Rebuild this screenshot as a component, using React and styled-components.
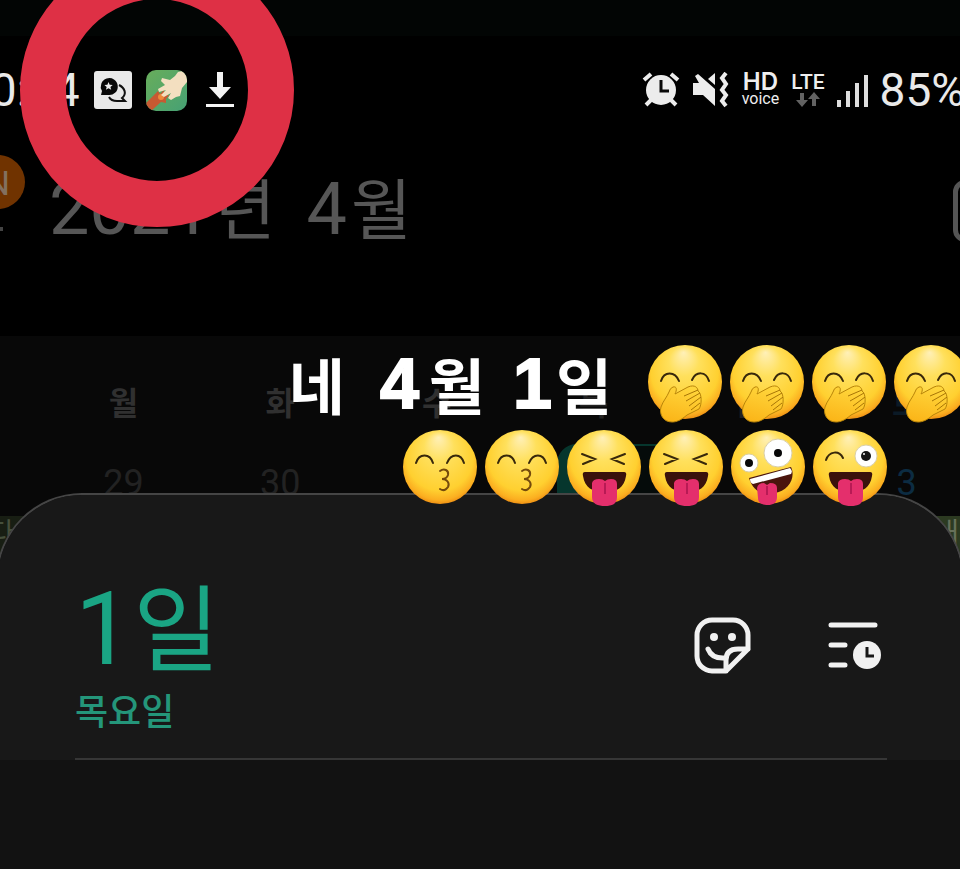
import React from "react";
import styled, { createGlobalStyle } from "styled-components";

const Global = createGlobalStyle`
  * { box-sizing: border-box; }
  html, body { margin: 0; background: #000; }
  body { font-family: Roboto, "Noto Sans CJK KR", sans-serif; color: #eee; overflow: hidden; }
  h1, h2, p { margin: 0; font-weight: 400; }
`;

const Screen = styled.main`
  position: relative;
  min-height: 100vh;
  overflow: hidden;
  display: flex;
  flex-direction: column;
  background: #000;
`;
const TopStrip = styled.div`
  height: 36px;
  background: #020504;
`;
const StatusBar = styled.header`
  display: flex;
  justify-content: space-between;
  align-items: center;
  height: 108px;
  margin: 0 -5px 0 -35px;
`;
const StatusGroup = styled.div`
  display: flex;
  align-items: center;
  gap: ${(p) => p.$gap}px;
`;
const StatusText = styled.span`
  font-size: 46px;
  line-height: 48px;
  color: #e9e9e9;
`;
const Stack = styled.span`
  display: flex;
  flex-direction: column;
  align-items: center;
  height: 36px;
`;
const StackTop = styled.span`
  font-family: ${(p) => p.$family};
  font-size: ${(p) => p.$size}px;
  line-height: 20px;
  font-weight: ${(p) => p.$weight};
`;
const StackBottom = styled.span`
  font-size: 16px;
  line-height: 14px;
`;

const MonthBar = styled.header`
  display: flex;
  align-items: flex-start;
  justify-content: space-between;
  height: 192px;
  padding: 11px 0 0 0;
  margin: 0 -55px 0 -29px;
`;
const MonthLeft = styled.div`
  display: flex;
  gap: 24px;
`;
const MenuButton = styled.button`
  width: 54px;
  height: 78px;
  padding: 0;
  border: 0;
  display: flex;
  flex-direction: column;
  align-items: center;
  background: none;
  color: #555;
  font-family: inherit;
`;
const Badge = styled.span`
  width: 54px;
  height: 54px;
  border-radius: 50%;
  background: #703300;
  color: #83705f;
  font-size: 34px;
  line-height: 56px;
  text-align: center;
`;
const MenuEdge = styled.span`
  width: 4px;
  height: 4px;
  margin: 18px 0 0 6px;
  background: #444;
`;
const MonthTitle = styled.h1`
  display: flex;
  align-items: baseline;
  gap: 31px;
  font-size: 72px;
  line-height: 76px;
  margin-top: 17px;
  color: #565656;
  white-space: nowrap;
`;
const Hangul = styled.span`
  font-size: ${(p) => p.$size}px;
  margin-left: ${(p) => p.$gap}px;
`;
const TodayButton = styled.button`
  width: 62px;
  height: 62px;
  margin-top: 25px;
  border: 5px solid #555;
  border-radius: 12px;
  background: none;
`;

const Calendar = styled.section`
  height: 264px;
  padding-top: 51px;
  background: #080808;
`;
const Week = styled.div`
  display: grid;
  grid-template-columns: repeat(7, 1fr);
  width: 114.2%;
  margin: 0 0 ${(p) => p.$after || 0}px -11.6%;
  text-align: center;
`;
const WeekDay = styled.span`
  font-size: 32px;
  line-height: 34px;
  font-weight: 700;
  color: ${(p) => p.$color || "#303030"};
`;
const DayCell = styled.span`
  position: relative;
  font-size: 36px;
  line-height: 32px;
  color: ${(p) => p.$color || "#222"};
`;
const Selected = styled.span`
  position: absolute;
  left: 27%;
  top: -23px;
  width: 110px;
  height: 80px;
  border: 2px solid #06362d;
  border-radius: 20px 8px 0 0;
  background: linear-gradient(90deg, #06362d 20px, #050b0a 24px);
`;
const Events = styled.div`
  display: flex;
  justify-content: space-between;
  height: 60px;
  overflow: hidden;
`;
const EventBar = styled.span`
  width: 70px;
  padding: 0 1px;
  font-size: 28px;
  line-height: 36px;
  background: ${(p) => p.$bg};
  color: ${(p) => p.$fg};
  text-align: ${(p) => p.$align};
  text-indent: ${(p) => p.$indent || 0}px;
  white-space: nowrap;
  overflow: hidden;
`;

const Sheet = styled.section`
  position: relative;
  flex: 1;
  margin: -107px -4px 0;
  border: 2px solid #454545;
  border-bottom: 0;
  border-radius: 86px 86px 0 0;
  background: #121212;
  overflow: hidden;
`;
const SheetHead = styled.header`
  padding: 82px 75px 0 77px;
  background: #181818;
`;
const SheetRow = styled.div`
  display: flex;
  justify-content: space-between;
  align-items: flex-start;
  min-height: 183px;
  border-bottom: 2px solid #363636;
`;
const DayNumber = styled.h2`
  font-size: 102px;
  line-height: 104px;
  color: #1aa584;
  white-space: nowrap;
`;
const DayName = styled.p`
  font-size: 36px;
  line-height: 58px;
  font-weight: 500;
  color: #24967a;
`;
const Actions = styled.div`
  display: flex;
  align-items: center;
  gap: 77px;
  margin: 40px 6px 0 0;
`;
const IconButton = styled.button`
  display: flex;
  padding: 0;
  border: 0;
  background: none;
`;

const Ring = styled.div`
  position: absolute;
  top: -47px;
  left: 20px;
  width: 274px;
  height: 274px;
  border: 46px solid #de3045;
  border-radius: 50%;
`;
const Caption = styled.div`
  position: absolute;
  top: 340px;
  right: -8px;
  display: flex;
  flex-direction: column;
  align-items: flex-end;
  gap: 2px;
`;
const CaptionLine = styled.div`
  display: flex;
  align-items: center;
  gap: 8px;
  height: 83px;
  padding-right: ${(p) => p.$end || 0}px;
`;
const CaptionText = styled.p`
  display: flex;
  align-items: center;
  align-self: flex-start;
  font-family: "Noto Sans CJK KR", sans-serif;
  font-size: 61px;
  line-height: 78px;
  font-weight: 700;
  color: #fff;
  margin-right: 28px;
`;
const HeavyDigit = styled.span`
  font-family: "Liberation Sans", sans-serif;
  font-size: 70px;
  -webkit-text-stroke: 2px #fff;
  line-height: 88px;
  margin: 0 ${(p) => p.$after}px 0 ${(p) => p.$before}px;
`;

const ChatIcon = () => (
  <svg width="38" height="38" viewBox="0 0 38 38" aria-hidden="true">
    <rect width="38" height="38" rx="3" fill="#e9e9e9" />
    <path d="M25 14C31 17 33 23 28 27L31 30H23C19 30 16 28 15 26" fill="none" stroke="#111" strokeWidth="2" />
    <path d="M7 24L8 20A8.500 8.500 0 1 1 14 24Z" fill="#080808" />
    <path d="M14.500 11l1.200 2.700 3 .2-2.300 2 .8 2.900-2.700-1.600-2.600 1.600.8-2.900-2.300-2 3-.2z" fill="#eee" />
  </svg>
);
const HandAppIcon = () => (
  <svg width="41" height="41" viewBox="0 0 41 41" aria-hidden="true">
    <defs>
      <linearGradient id="app" x2="1" y2="1">
        <stop stopColor="#68ad5b" />
        <stop offset="1" stopColor="#46a174" />
      </linearGradient>
      <clipPath id="appClip"><rect width="41" height="41" rx="10" /></clipPath>
    </defs>
    <g clipPath="url(#appClip)">
      <rect width="41" height="41" fill="url(#app)" />
      <path d="M0 33L9 24L12 21L14 24L18 20L18 25L23 25L20 29L20 33L15 32L5 41H0Z" fill="#c75a32" />
      <circle cx="15" cy="27" r="3" fill="#ed8a3c" />
      <path d="M32 2L41 0V12L36 18L34 26L30 27L25 30L22 28L25 23L18 27L15 25L20 20L13 22L12 19L19 15L15 11L16 8L24 10L29 6Z" fill="#f3dfc0" />
    </g>
  </svg>
);
const DownloadIcon = () => (
  <svg width="38" height="38" viewBox="0 0 38 38" aria-hidden="true">
    <path d="M16 1H22V16H30L19 28L8 16H16Z" fill="#f3f3f3" />
    <path d="M5 33H33V36H5Z" fill="#f3f3f3" />
  </svg>
);
const AlarmIcon = () => (
  <svg width="38" height="36" viewBox="0 0 38 36" aria-hidden="true">
    <g stroke="#ececec" strokeWidth="4" fill="none">
      <path d="M2 8L9 2M29 2L36 8M10 27L4 33M28 27L34 33" />
    </g>
    <circle cx="19" cy="18" r="15" fill="#ececec" />
    <path d="M19 8V19H27" fill="none" stroke="#080808" strokeWidth="3" />
  </svg>
);
const MuteIcon = () => (
  <svg width="38" height="36" viewBox="0 0 38 36" aria-hidden="true">
    <path d="M1 11H7L3 4L6 2L23 17V34L11 23H1Z" fill="#ececec" />
    <path d="M23 1V13L16 7Z" fill="#ececec" />
    <path d="M34 1L30 6L34 12L30 18L34 23L30 29L34 34" fill="none" stroke="#ececec" strokeWidth="4" />
  </svg>
);
const DataArrows = () => (
  <svg width="26" height="16" viewBox="0 0 26 16" aria-hidden="true">
    <path d="M5 1H9V8H13L7 15L1 8H5ZM17 14H21V7H25L19 0L13 7H17Z" fill="#626262" />
  </svg>
);
const SignalIcon = () => (
  <svg width="31" height="33" viewBox="0 0 31 33" aria-hidden="true">
    <path d="M0 26H4V33H0ZM9 17H13V33H9ZM18 9H22V33H18ZM27 1H31V33H27Z" fill="#dedede" />
  </svg>
);
const StickerIcon = () => (
  <svg width="57" height="57" viewBox="0 0 57 57" aria-hidden="true">
    <path
      d="M54 32V18A15 15 0 0 0 39 3H18A15 15 0 0 0 3 18V39A15 15 0 0 0 18 54H32L54 32H44Q32 32 32 43V54M14 32Q18 42 31 41"
      fill="none" stroke="#f1f1f1" strokeWidth="5" strokeLinejoin="round" strokeLinecap="round"
    />
    <circle cx="20" cy="20" r="4" fill="#f1f1f1" />
    <circle cx="38" cy="20" r="4" fill="#f1f1f1" />
  </svg>
);
const AgendaIcon = () => (
  <svg width="53" height="47" viewBox="0 0 53 47" aria-hidden="true">
    <path d="M3 3H47M3 23H17M3 43H17" stroke="#f1f1f1" strokeWidth="5" strokeLinecap="round" />
    <circle cx="39" cy="33" r="14" fill="#f1f1f1" />
    <path d="M39 25V34H46" fill="none" stroke="#181818" strokeWidth="3" />
  </svg>
);

const ink = { fill: "none", stroke: "#38280b", strokeWidth: 2, strokeLinecap: "round" };
const BigTongue = () => (
  <>
    <path d="M18 42H57Q60 42 59 46C57 58 50 62 38 62C25 62 18 58 16 46Q15 42 18 42Z" fill="#3a120c" />
    <path d="M25 53Q26 49 32 49Q36 49 38 51Q40 49 44 49Q50 49 50 54V67C50 74 45 76 38 76C31 76 25 74 25 67Z" fill="#e42f6c" />
    <path d="M38 53V64" stroke="#b81a55" strokeWidth="2" />
  </>
);
const faces = {
  giggle: (
    <>
      <path d="M13 36C16 26 27 26 31 36M44 35C48 26 58 26 61 36" {...ink} />
      <path
        d="M25 42C29 41 29 45 27 49L40 42C47 39 50 43 50 46C54 48 54 60 51 64L39 70C33 75 29 77 24 77C15 77 11 69 13 62C15 56 19 52 21 47Q22 43 25 42Z"
        fill="url(#hand)" stroke="#b88409" strokeWidth="1"
      />
      <path d="M36 51L50 45M38 56L52 48M41 61L53 52M43 65L52 58" fill="none" stroke="#a87506" strokeWidth="1" />
    </>
  ),
  kiss: (
    <>
      <path d="M13 33C16 23 27 23 30 33M44 33C48 23 58 23 61 33" {...ink} />
      <path d="M37 41C41 38 46 40 45 45C44 48 41 49 39 49C44 49 47 53 45 57C43 60 40 61 37 59" {...ink} stroke="#754b0c" />
    </>
  ),
  squint: (
    <>
      <path d="M15 24L28 29L16 34M58 24L45 29L57 34" {...ink} />
      <BigTongue />
    </>
  ),
  zany: (
    <>
      <circle cx="18" cy="33" r="9" fill="#fff" stroke="#d9cfa8" />
      <circle cx="18" cy="33" r="4" fill="#080808" />
      <circle cx="47" cy="23" r="14" fill="#fff" stroke="#d9cfa8" />
      <circle cx="47" cy="23" r="4" fill="#080808" />
      <path d="M18 48L60 37C65 47 58 61 43 63C30 65 22 61 18 48Z" fill="#4a150d" />
      <path d="M19 49L59 38Q62 41 60 44L22 54Q19 53 19 49Z" fill="#fff" />
      <path d="M26 58Q27 53 33 53L36 55L39 53Q46 53 46 58V67C46 73 42 75 37 75C31 75 27 73 27 68Z" fill="#e42f6c" />
      <path d="M36 56V65" stroke="#b81a55" strokeWidth="2" />
    </>
  ),
  wink: (
    <>
      <path d="M13 30C16 21 26 20 30 28" {...ink} />
      <circle cx="53" cy="26" r="11" fill="#fff" stroke="#d9cfa8" />
      <circle cx="53" cy="26" r="5" fill="#151515" />
      <circle cx="51" cy="24" r="1" fill="#fff" />
      <BigTongue />
    </>
  ),
};
const EmojiSvg = styled.svg`
  flex: none;
  overflow: visible;
`;
const Emoji = ({ kind }) => (
  <EmojiSvg width="74" height="74" viewBox="0 0 74 74" role="img" aria-label={kind}>
    <circle cx="37" cy="37" r="37" fill="url(#face)" />
    {faces[kind]}
  </EmojiSvg>
);
const EmojiPaint = styled.svg`
  position: absolute;
  width: 0;
  height: 0;
`;

const weekdays = ["일", "월", "화", "수", "목", "금", "토"];
const dates = ["28", "29", "30", "31", "1", "2", "3"];

export default function App() {
  return (
    <Screen>
      <Global />
      <EmojiPaint aria-hidden="true">
        <defs>
          <radialGradient id="face" cx="0.5" cy="0.44" r="0.58" fx="0.48" fy="0.1">
            <stop offset="0" stopColor="#fff0b8" />
            <stop offset="0.35" stopColor="#ffe05c" />
            <stop offset="0.78" stopColor="#ffd030" />
            <stop offset="0.92" stopColor="#fbae20" />
            <stop offset="1" stopColor="#e9850f" />
          </radialGradient>
          <linearGradient id="hand" x1="0.6" y1="0" x2="0.3" y2="1">
            <stop stopColor="#ffd63c" />
            <stop offset="1" stopColor="#fbb518" />
          </linearGradient>
        </defs>
      </EmojiPaint>
      <TopStrip />
      <StatusBar>
        <StatusGroup $gap={14}>
          <StatusText>10:04</StatusText>
          <ChatIcon />
          <HandAppIcon />
          <DownloadIcon />
        </StatusGroup>
        <StatusGroup $gap={12}>
          <AlarmIcon />
          <MuteIcon />
          <Stack>
            <StackTop $family="Inter, sans-serif" $size={24} $weight={600}>HD</StackTop>
            <StackBottom>voice</StackBottom>
          </Stack>
          <Stack>
            <StackTop $family="Roboto, sans-serif" $size={21} $weight={500}>LTE</StackTop>
            <DataArrows />
          </Stack>
          <SignalIcon />
          <StatusText>85%</StatusText>
        </StatusGroup>
      </StatusBar>
      <MonthBar>
        <MonthLeft>
          <MenuButton aria-label="메뉴">
            <Badge>N</Badge>
            <MenuEdge />
          </MenuButton>
          <MonthTitle>
            <span>2021<Hangul $size={66} $gap={4}>년</Hangul></span>
            <span>4<Hangul $size={66} $gap={4}>월</Hangul></span>
          </MonthTitle>
        </MonthLeft>
        <TodayButton aria-label="오늘" />
      </MonthBar>
      <Calendar>
        <Week $after={46}>
          {weekdays.map((d, i) => (
            <WeekDay key={d} $color={i === 6 ? "#0b1a26" : i > 3 ? "#222" : undefined}>{d}</WeekDay>
          ))}
        </Week>
        <Week $after={17}>
          {dates.map((d, i) => (
            <DayCell key={d} $color={i === 6 ? "#0c2c42" : undefined}>
              {i === 4 ? <Selected /> : d}
            </DayCell>
          ))}
        </Week>
        <Events>
          <EventBar $bg="#181e13" $fg="#46503c" $align="left" $indent={-12}>다</EventBar>
          <EventBar $bg="#2c3a21" $fg="#66705a" $align="right">내</EventBar>
        </Events>
      </Calendar>
      <Sheet>
        <SheetHead>
          <SheetRow>
            <div>
              <DayNumber>1<Hangul $size={94} $gap={1}>일</Hangul></DayNumber>
              <DayName>목요일</DayName>
            </div>
            <Actions>
              <IconButton aria-label="스티커"><StickerIcon /></IconButton>
              <IconButton aria-label="일정 목록"><AgendaIcon /></IconButton>
            </Actions>
          </SheetRow>
        </SheetHead>
      </Sheet>
      <Caption>
        <CaptionLine>
          <CaptionText>
            <span>네</span>
            <HeavyDigit $before={35} $after={10}>4</HeavyDigit>
            <span>월</span>
            <HeavyDigit $before={28} $after={4}>1</HeavyDigit>
            <span>일</span>
          </CaptionText>
          <Emoji kind="giggle" />
          <Emoji kind="giggle" />
          <Emoji kind="giggle" />
          <Emoji kind="giggle" />
        </CaptionLine>
        <CaptionLine $end={81}>
          <Emoji kind="kiss" />
          <Emoji kind="kiss" />
          <Emoji kind="squint" />
          <Emoji kind="squint" />
          <Emoji kind="zany" />
          <Emoji kind="wink" />
        </CaptionLine>
      </Caption>
      <Ring />
    </Screen>
  );
}
